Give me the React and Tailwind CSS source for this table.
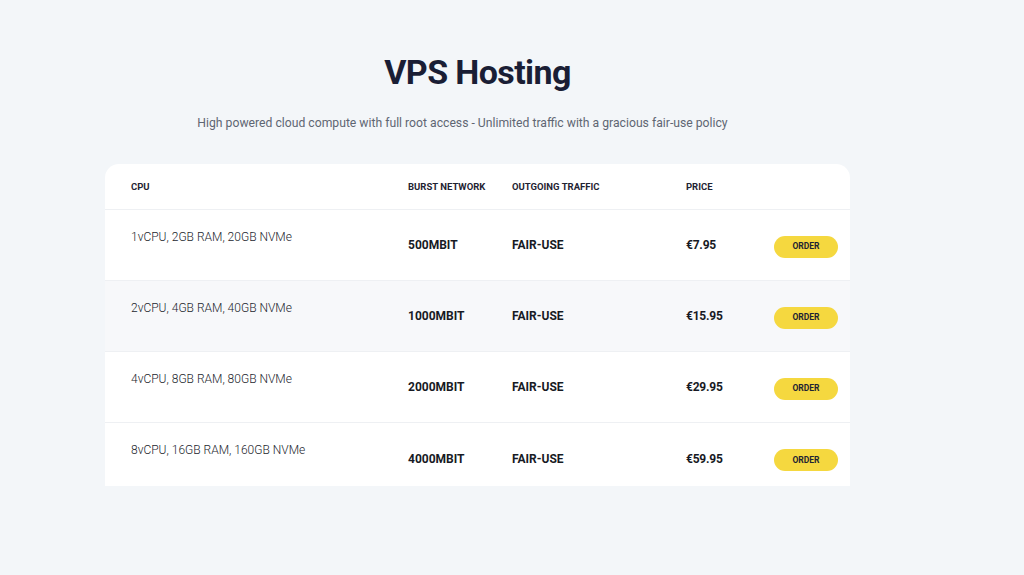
import React from "react";

const rows = [
  { cpu: "1vCPU, 2GB RAM, 20GB NVMe", net: "500MBIT", price: "€7.95", bg: "bg-white" },
  { cpu: "2vCPU, 4GB RAM, 40GB NVMe", net: "1000MBIT", price: "€15.95", bg: "bg-[#f7f8fa]" },
  { cpu: "4vCPU, 8GB RAM, 80GB NVMe", net: "2000MBIT", price: "€29.95", bg: "bg-white" },
  { cpu: "8vCPU, 16GB RAM, 160GB NVMe", net: "4000MBIT", price: "€59.95", bg: "bg-white" },
];

export default function App() {
  return (
    <div className="w-[1024px] h-[575px] bg-[#f3f6f9] overflow-hidden" style={{ fontFamily: "Roboto, 'Liberation Sans', sans-serif" }}>
      <div className="ml-[105px] w-[745px] pt-[50px]">
        <h1 className="text-center text-[34px] leading-[44px] font-bold text-[#1a1e35] tracking-[-0.6px]">VPS Hosting</h1>
        <p className="mt-[21px] pr-[30px] text-center text-[12.2px] leading-[16px] text-[#5f6673]">
          High powered cloud compute with full root access - Unlimited traffic with a gracious fair-use policy
        </p>
        <div className="mt-[33px] h-[322px] bg-white rounded-t-[14px] overflow-hidden">
          <div className="grid grid-cols-[277px_104px_174px_88px_64px] pl-[26px] h-[46px] pt-[2px] items-center border-b border-[#eef0f3] text-[9.5px] font-bold text-[#1f2433] uppercase">
            <div>CPU</div>
            <div>Burst Network</div>
            <div>Outgoing Traffic</div>
            <div>Price</div>
            <div></div>
          </div>
          {rows.map((r, i) => (
            <div
              key={i}
              className={`grid grid-cols-[277px_104px_174px_88px_64px] pl-[26px] items-center h-[71px] shrink-0 ${r.bg} ${i < rows.length - 1 ? "border-b border-[#eef0f3]" : ""}`}
            >
              <div className="self-start pt-[20px] text-[12px] leading-[14px] font-light text-[#23262e]">{r.cpu}</div>
              <div className="text-[12px] font-bold text-[#171a24]">{r.net}</div>
              <div className="text-[12px] font-bold text-[#171a24]">FAIR-USE</div>
              <div className="text-[12px] font-bold text-[#171a24] tracking-[-0.2px]">{r.price}</div>
              <div>
                <button className="w-[64px] h-[22px] rounded-full bg-[#f5d83f] text-[8.5px] font-bold text-[#1f2433]">ORDER</button>
              </div>
            </div>
          ))}
        </div>
      </div>
    </div>
  );
}
